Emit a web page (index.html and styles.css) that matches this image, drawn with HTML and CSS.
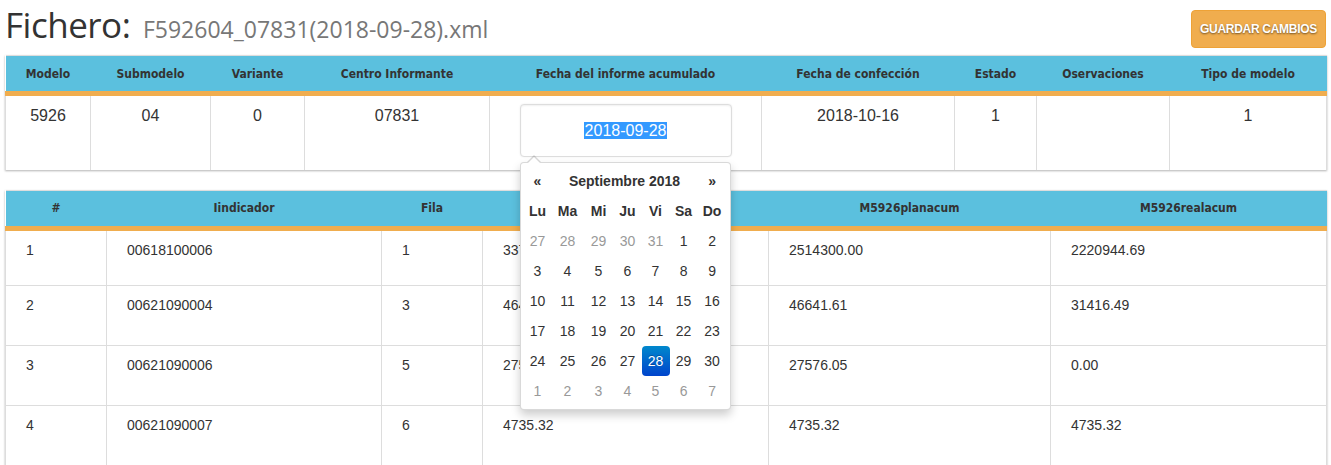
FILE: index.html
```html
<!DOCTYPE html>
<html lang="es">
<head>
<meta charset="utf-8">
<title>Fichero</title>
<link rel="stylesheet" href="styles.css">
</head>
<body>
<div class="page">
  <header class="topbar">
    <h1 class="title">Fichero: <small class="filename">F592604_07831(2018-09-28).xml</small></h1>
    <button class="btn-save">GUARDAR CAMBIOS</button>
  </header>

  <table class="grid grid-main">
    <colgroup>
      <col style="width:85px"><col style="width:120px"><col style="width:94px"><col style="width:185px"><col style="width:272px"><col style="width:193px"><col style="width:82px"><col style="width:133px"><col style="width:157px">
    </colgroup>
    <thead>
      <tr>
        <th>Modelo</th><th>Submodelo</th><th>Variante</th><th>Centro Informante</th><th>Fecha del informe acumulado</th><th>Fecha de confección</th><th>Estado</th><th>Oservaciones</th><th>Tipo de modelo</th>
      </tr>
    </thead>
    <tbody>
      <tr>
        <td>5926</td><td>04</td><td>0</td><td>07831</td>
        <td class="date-cell">
          <div class="date-wrap">
            <div class="date-input"><span class="sel">2018-09-28</span></div>
            <div class="datepicker">
              <table class="dp-table">
                <colgroup>
                  <col class="c28"><col class="c32"><col class="c30"><col class="c28"><col class="c28"><col class="c28"><col class="c29">
                </colgroup>
                <thead>
                  <tr><th class="dp-nav">«</th><th colspan="5" class="dp-switch">Septiembre 2018</th><th class="dp-nav">»</th></tr>
                  <tr class="dp-dow"><th>Lu</th><th>Ma</th><th>Mi</th><th>Ju</th><th>Vi</th><th>Sa</th><th>Do</th></tr>
                </thead>
                <tbody>
                  <tr><td class="old">27</td><td class="old">28</td><td class="old">29</td><td class="old">30</td><td class="old">31</td><td>1</td><td>2</td></tr>
                  <tr><td>3</td><td>4</td><td>5</td><td>6</td><td>7</td><td>8</td><td>9</td></tr>
                  <tr><td>10</td><td>11</td><td>12</td><td>13</td><td>14</td><td>15</td><td>16</td></tr>
                  <tr><td>17</td><td>18</td><td>19</td><td>20</td><td>21</td><td>22</td><td>23</td></tr>
                  <tr><td>24</td><td>25</td><td>26</td><td>27</td><td class="active">28</td><td>29</td><td>30</td></tr>
                  <tr><td class="old">1</td><td class="old">2</td><td class="old">3</td><td class="old">4</td><td class="old">5</td><td class="old">6</td><td class="old">7</td></tr>
                </tbody>
              </table>
            </div>
          </div>
        </td>
        <td>2018-10-16</td><td>1</td><td></td><td>1</td>
      </tr>
    </tbody>
  </table>

  <table class="grid grid-data">
    <colgroup>
      <col style="width:101px"><col style="width:275px"><col style="width:101px"><col style="width:286px"><col style="width:282px"><col style="width:276px">
    </colgroup>
    <thead>
      <tr><th>#</th><th>Iindicador</th><th>Fila</th><th>M5926realmes</th><th>M5926planacum</th><th>M5926realacum</th></tr>
    </thead>
    <tbody>
      <tr><td>1</td><td>00618100006</td><td>1</td><td>337561.40</td><td>2514300.00</td><td>2220944.69</td></tr>
      <tr><td>2</td><td>00621090004</td><td>3</td><td>4641.61</td><td>46641.61</td><td>31416.49</td></tr>
      <tr><td>3</td><td>00621090006</td><td>5</td><td>27576.05</td><td>27576.05</td><td>0.00</td></tr>
      <tr><td>4</td><td>00621090007</td><td>6</td><td>4735.32</td><td>4735.32</td><td>4735.32</td></tr>
    </tbody>
  </table>
</div>
</body>
</html>
```

FILE: styles.css
```css
* { box-sizing: border-box; }
html, body { margin: 0; padding: 0; background: #fff; }
body {
  font-family: "Liberation Sans", Arial, sans-serif;
  color: #333;
  overflow: hidden;
}
.page { padding: 0 5px; width: 1331px; }

.topbar {
  display: flex;
  justify-content: space-between;
  align-items: flex-start;
  height: 55px;
}
.title {
  margin: 0;
  padding-top: 3px;
  font-family: "Open Sans", sans-serif;
  font-weight: 400;
  font-size: 35px;
  line-height: 44px;
  color: #333;
  letter-spacing: -0.5px;
}
.filename {
  font-size: 23px;
  color: #777;
  margin-left: 4px;
  letter-spacing: 0;
}
.btn-save {
  margin-top: 10px;
  margin-right: 0;
  width: 135px;
  height: 38px;
  background: #f0ad4e;
  border: 1px solid #eea236;
  border-radius: 4px;
  color: #fff;
  font-family: "Liberation Sans", Arial, sans-serif;
  font-weight: bold;
  font-size: 12px;
  letter-spacing: -0.3px;
  text-shadow: 0 1px 2px rgba(0,0,0,.55);
  padding: 0;
}

.grid {
  width: 1321px;
  table-layout: fixed;
  border-collapse: collapse;
  box-shadow: 0 1px 2px rgba(0,0,0,.3);
  border-top: 1px solid #ddd;
}
.grid th {
  background: #5bc0de;
  color: #333;
  font-family: "DejaVu Sans Condensed", "DejaVu Sans", sans-serif;
  font-weight: bold;
  font-size: 12px;
  height: 38px;
  padding: 0 4px;
  text-align: center;
  border-bottom: 5px solid #f0ad4e;
  white-space: nowrap;
}
.grid td {
  border-left: 1px solid #ddd;
  border-right: 1px solid #ddd;
  vertical-align: top;
}
.grid-main td {
  font-size: 16px;
  text-align: center;
  height: 76px;
  padding: 9px 8px 0;
  line-height: 22px;
}
.grid-main td.date-cell { padding: 8px 0 0; }
.date-wrap {
  position: relative;
  width: 212px;
  margin: 0 auto;
}
.date-input {
  height: 53px;
  border: 1px solid #ddd;
  border-radius: 4px;
  box-shadow: inset 0 1px 2px rgba(0,0,0,.06), 0 0 2px rgba(0,0,0,.08);
  text-align: center;
  line-height: 52px;
  font-size: 16px;
  background: #fff;
}
.sel { background: #3399ff; color: #fff; padding: 0 1px; }

.grid-data { margin-top: 20px; }
.grid-data td {
  font-size: 14px;
  text-align: left;
  padding: 10px 20px 0;
  line-height: 18px;
  height: 60px;
  border-bottom: 1px solid #ddd;
}
.grid-data tbody tr:first-child td { height: 57px; }

/* Datepicker */
.datepicker {
  position: absolute;
  top: calc(100% + 5px);
  left: 0;
  width: 211px;
  padding: 3px;
  background: #fff;
  border: 1px solid rgba(0,0,0,.15);
  border-radius: 4px;
  box-shadow: 0 5px 10px rgba(0,0,0,.2);
  z-index: 10;
  text-align: center;
}
.datepicker::before {
  content: "";
  position: absolute;
  top: -8px;
  left: 6px;
  border-left: 7px solid transparent;
  border-right: 7px solid transparent;
  border-bottom: 7px solid rgba(0,0,0,.15);
}
.datepicker::after {
  content: "";
  position: absolute;
  top: -6px;
  left: 7px;
  border-left: 6px solid transparent;
  border-right: 6px solid transparent;
  border-bottom: 6px solid #fff;
}
.dp-table {
  width: 203px;
  table-layout: fixed;
  border-collapse: collapse;
  font-family: "Liberation Sans", Arial, sans-serif;
  font-size: 14px;
}
.c28 { width: 28px; }
.c29 { width: 29px; }
.c30 { width: 30px; }
.c32 { width: 32px; }
.grid .dp-table th,
.dp-table th {
  background: transparent;
  border: 0;
  height: 30px;
  padding: 0;
  font-family: "Liberation Sans", Arial, sans-serif;
  font-size: 14px;
  font-weight: bold;
  color: #333;
}
.dp-table td {
  border: 0;
  height: 30px;
  padding: 0;
  line-height: 30px;
  text-align: center;
  font-size: 14px;
  color: #333;
  vertical-align: middle;
  border-radius: 4px;
}
.dp-table td.old { color: #999; }
.dp-table td.active {
  background: linear-gradient(#0088cc, #0044cc);
  color: #fff;
  text-shadow: 0 -1px 0 rgba(0,0,0,.25);
}
.dp-nav { font-size: 14px; }
```
